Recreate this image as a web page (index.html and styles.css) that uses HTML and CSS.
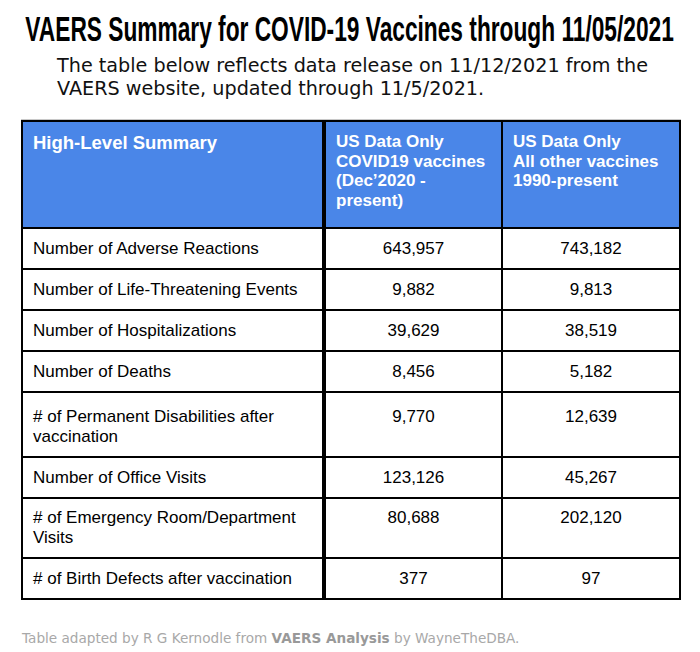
FILE: index.html
```html
<!DOCTYPE html>
<html>
<head>
<meta charset="utf-8">
<link rel="stylesheet" href="styles.css">
</head>
<body>
<div class="page">
  <h1 class="title"><span class="title-text">VAERS Summary for COVID-19 Vaccines through 11/05/2021</span></h1>
  <p class="intro">The table below reflects data release on 11/12/2021 from the VAERS website, updated through 11/5/2021.</p>
  <div class="frame">
    <table class="summary">
      <colgroup><col class="c1"><col class="c2"><col class="c3"></colgroup>
      <thead>
        <tr>
          <th class="lead">High-Level Summary</th>
          <th class="mid">US Data Only<br>COVID19 vaccines<br>(Dec’2020 -<br>present)</th>
          <th>US Data Only<br>All other vaccines<br>1990-present</th>
        </tr>
      </thead>
      <tbody>
        <tr><td class="lead">Number of Adverse Reactions</td><td class="mid num">643,957</td><td class="num">743,182</td></tr>
        <tr><td class="lead">Number of Life-Threatening Events</td><td class="mid num">9,882</td><td class="num">9,813</td></tr>
        <tr><td class="lead">Number of Hospitalizations</td><td class="mid num">39,629</td><td class="num">38,519</td></tr>
        <tr><td class="lead">Number of Deaths</td><td class="mid num">8,456</td><td class="num">5,182</td></tr>
        <tr class="tall"><td class="lead">#&nbsp;of Permanent Disabilities after vaccination</td><td class="mid num">9,770</td><td class="num">12,639</td></tr>
        <tr><td class="lead">Number of Office Visits</td><td class="mid num">123,126</td><td class="num">45,267</td></tr>
        <tr class="tall2"><td class="lead">#&nbsp;of Emergency Room/Department Visits</td><td class="mid num">80,688</td><td class="num">202,120</td></tr>
        <tr><td class="lead">#&nbsp;of Birth Defects after vaccination</td><td class="mid num">377</td><td class="num">97</td></tr>
      </tbody>
    </table>
  </div>
  <p class="credit">Table adapted by R G Kernodle from <b>VAERS Analysis</b> by WayneTheDBA.</p>
</div>
</body>
</html>
```

FILE: styles.css
```css
html, body {
  margin: 0;
  padding: 0;
  background: #ffffff;
}

.page {
  width: 700px;
  height: 652px;
  overflow: hidden;
}

.title {
  margin: 0;
  padding-top: 9px;
  height: 40px;
  text-align: center;
  font-family: "Liberation Sans", Arial, sans-serif;
  font-weight: bold;
  font-size: 35px;
  line-height: 40px;
  color: #000;
  white-space: nowrap;
}

.title-text {
  display: inline-block;
  transform: scaleX(0.649);
  transform-origin: center;
  margin: 0 -200px;
}

.intro {
  margin: 5px 0 0 57px;
  width: 630px;
  font-family: "DejaVu Sans", sans-serif;
  font-size: 19.2px;
  line-height: 23px;
  color: #111;
}

.frame {
  margin: 19px 0 0 21px;
  width: 659px;
  border-top: 1px solid #c8c8c8;
  border-right: 1px solid #c8c8c8;
}

.summary {
  border-collapse: collapse;
  width: 658px;
  table-layout: fixed;
  font-family: "Liberation Sans", Arial, sans-serif;
  font-size: 17px;
  color: #000;
  border: 2px solid #000;
}

.c1 { width: 302px; }
.c2 { width: 178px; }
.c3 { width: 178px; }

.summary th {
  background: #4a86e8;
  color: #ffffff;
  font-weight: bold;
  text-align: left;
  vertical-align: top;
  font-size: 17px;
  line-height: 19.5px;
  padding: 10px 10px 0 10px;
  height: 94px;
  border: 2px solid #000;
}

.summary th.lead {
  font-size: 18.5px;
  padding-top: 11px;
}

.summary td {
  border: 2px solid #000;
  height: 39px;
  padding: 0 10px;
  line-height: 20px;
  vertical-align: middle;
}

.summary .mid {
  border-left: 4px solid #000;
}

.summary td.num {
  text-align: center;
}

.summary tr.tall td {
  height: 49px;
  vertical-align: top;
  padding-top: 14px;
}

.summary tr.tall2 td {
  height: 49px;
  vertical-align: top;
  padding-top: 9px;
}

.credit {
  margin: 30px 0 0 22px;
  font-family: "DejaVu Sans", sans-serif;
  font-size: 13.6px;
  color: #a8a8a8;
}

.credit b {
  font-weight: bold;
  color: #999;
}
```
